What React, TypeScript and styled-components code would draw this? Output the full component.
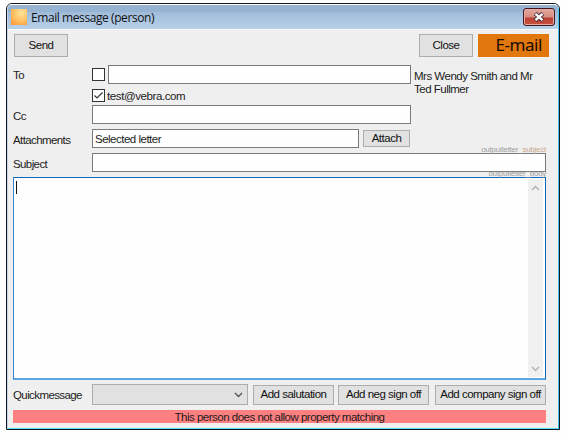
import styled, { createGlobalStyle } from "styled-components";

const GlobalStyle = createGlobalStyle`
  * {
    box-sizing: border-box;
  }
  body {
    margin: 0;
    background: #fefefe;
    overflow: hidden;
  }
`;

const Page = styled.div`
  width: 565px;
  height: 437px;
  padding: 3px 5px 7px 6px;
  font-family: "Liberation Sans", Arial, sans-serif;
  font-size: 11.5px;
  letter-spacing: -0.5px;
  line-height: 13px;
  color: #1c1c1c;
  white-space: nowrap;
`;

const Frame = styled.div`
  height: 427px;
  border: 1px solid #15171c;
  border-radius: 6px 6px 0 0;
  background: #efefef;
  overflow: hidden;
`;

const Inner = styled.div`
  height: 425px;
  border: solid #fff;
  border-width: 1px 1px 1px;
  border-left-color: #c3d8ee;
  border-right-color: #45c3ea;
  border-bottom-color: #4fe0fb;
  border-radius: 5px 5px 0 0;
  overflow: hidden;
`;

const TitleBar = styled.header`
  display: flex;
  align-items: center;
  height: 25px;
  padding: 0 3px;
  background: linear-gradient(#96b4d2 0 7px, #a0bcda 7px, #b8d1ea 24px);
  border-bottom: 1px solid #f6f8fa;
`;

const AppIcon = styled.div`
  width: 16px;
  height: 16px;
  background: radial-gradient(circle at 65% 25%, #ffe39c, #ffbd5e 55%, #fb8f2e);
`;

const Title = styled.h1`
  flex: 1;
  margin: 2px 0 0 4px;
  font: 12px/16px "Open Sans", sans-serif;
  letter-spacing: -0.42px;
  color: #111;
`;

const WindowClose = styled.button`
  display: flex;
  align-items: center;
  justify-content: center;
  width: 32px;
  height: 18px;
  padding: 0;
  border: 1px solid #431820;
  border-radius: 3px;
  background: linear-gradient(#dfa298 0 2px, #d68c80 8px, #bb3f35 9px, #c8523f);
  box-shadow: inset 0 0 0 1px #e5aaa0;
`;

const Form = styled.main`
  display: flex;
  flex-direction: column;
  padding: 4px 12px 0 5px;
`;

const Row = styled.div<{ $height: number; $top?: number }>`
  display: flex;
  align-items: center;
  height: ${(props) => props.$height}px;
  margin-top: ${(props) => props.$top ?? 0}px;
`;

const Label = styled.label<{ $drop?: number }>`
  flex: none;
  width: 79px;
  padding-top: ${(props) => props.$drop ?? 3}px;
  letter-spacing: -0.6px;
`;

const Button = styled.button<{ $width: number; $height?: number; $left?: number }>`
  flex: none;
  width: ${(props) => props.$width}px;
  height: ${(props) => props.$height ?? 20}px;
  margin-left: ${(props) => props.$left ?? 0}px;
  padding: 0;
  border: 1px solid #adadad;
  background: #e1e1e1;
  font: inherit;
  letter-spacing: inherit;
  color: #111;
`;

const EmailBadge = styled.div`
  width: 71px;
  height: 23px;
  margin: 0 -3px 0 5px;
  padding-right: 7px;
  background: #e2770e;
  font: 17px/22px "Noto Sans", sans-serif;
  letter-spacing: -0.45px;
  text-align: right;
  color: #160b02;
`;

const Field = styled.div<{ $width: number; $left?: number }>`
  flex: none;
  width: ${(props) => props.$width}px;
  height: 19px;
  margin-left: ${(props) => props.$left ?? 0}px;
  padding: 3px 2px 0;
  border: 1px solid #7a7a7a;
  background: #fefefe;
`;

const CheckBox = styled.span`
  display: flex;
  flex: none;
  width: 13px;
  height: 13px;
  border: 1px solid #333;
  background: #fff;
`;

const CheckLabel = styled.label`
  margin-left: 2px;
  padding-top: 1px;
  letter-spacing: -0.4px;
`;

const Recipient = styled.div`
  align-self: flex-start;
  margin: 5px 0 0 3px;
`;

const SubjectField = styled(Field)`
  position: relative;
`;

const FieldHint = styled.span<{ $top: number }>`
  position: absolute;
  top: ${(props) => props.$top}px;
  right: -1px;
  font: 8px/8px "Liberation Sans", sans-serif;
  letter-spacing: -0.25px;
  color: #a0a0a0;
  span {
    color: #c9a88a;
  }
`;

const Message = styled.div`
  position: relative;
  display: flex;
  justify-content: space-between;
  height: 203px;
  margin-top: 5px;
  padding: 1px;
  border: 1px solid #0f66bd;
  border-left-color: #3484cc;
  border-bottom: 2px solid #5ba5e0;
  background: #fefefe;
`;

const Caret = styled.span`
  width: 1px;
  height: 13px;
  margin: 2px 0 0 1px;
  background: #111;
`;

const ScrollBar = styled.div`
  display: flex;
  flex-direction: column;
  justify-content: space-between;
  align-items: center;
  width: 15px;
  margin-right: 1px;
  padding: 6px 0 5px;
  background: #f0f0f0;
`;

const Select = styled(Field)`
  display: flex;
  align-items: center;
  justify-content: flex-end;
  height: 21px;
  padding: 0 4px 0 0;
  border-color: #adadad;
  background: #e1e1e1;
`;

const Notice = styled.footer`
  height: 13px;
  margin-top: 5px;
  padding-top: 1px;
  background: #ff8080;
  text-align: center;
`;

const Chevron = ({ up, color = "#b0b0b0" }: { up?: boolean; color?: string }) => (
  <svg width="9" height="6" viewBox="0 0 9 6" fill="none">
    <path
      d={up ? "M1 5L4.5 1.5L8 5" : "M1 1L4.5 4.5L8 1"}
      stroke={color}
      strokeWidth={1.4}
    />
  </svg>
);

const App = () => {
  return (
    <Page>
      <GlobalStyle />
      <Frame>
        <Inner>
          <TitleBar>
            <AppIcon />
            <Title>Email message (person)</Title>
            <WindowClose aria-label="Close window">
              <svg width="12" height="10" viewBox="0 0 12 10">
                <path d="M2.2 1.5L9.8 8.5M9.8 1.5L2.2 8.5" stroke="#4b3038" strokeWidth="4.4" />
                <path d="M2.5 1.8L9.5 8.2M9.5 1.8L2.5 8.2" stroke="#fff" strokeWidth="2.4" />
              </svg>
            </WindowClose>
          </TitleBar>
          <Form>
            <Row $height={23}>
              <Button $width={54} $height={23} $left={1}>Send</Button>
              <Button $width={54} $height={23} $left={351}>Close</Button>
              <EmailBadge>E-mail</EmailBadge>
            </Row>
            <Row $height={19} $top={8}>
              <Label $drop={1}>To</Label>
              <CheckBox />
              <Field $width={303} $left={3} />
              <Recipient>
                Mrs Wendy Smith and Mr
                <br />
                Ted Fullmer
              </Recipient>
            </Row>
            <Row $height={13} $top={5}>
              <Label />
              <CheckBox>
                <svg width="11" height="11" viewBox="0 0 11 11" fill="none">
                  <path d="M1.5 5.5L4 8L9.5 2.5" stroke="#333" strokeWidth="1.2" />
                </svg>
              </CheckBox>
              <CheckLabel>test@vebra.com</CheckLabel>
            </Row>
            <Row $height={19} $top={3}>
              <Label>Cc</Label>
              <Field $width={319} />
            </Row>
            <Row $height={19} $top={5}>
              <Label>Attachments</Label>
              <Field $width={267}>Selected letter</Field>
              <Button $width={47} $height={17} $left={4}>Attach</Button>
            </Row>
            <Row $height={19} $top={5}>
              <Label>Subject</Label>
              <SubjectField $width={454}>
                <FieldHint $top={-8}>
                  outputletter_<span>subject</span>
                </FieldHint>
              </SubjectField>
            </Row>
            <Message>
              <FieldHint $top={-8}>outputletter_body</FieldHint>
              <Caret />
              <ScrollBar>
                <Chevron up />
                <Chevron />
              </ScrollBar>
            </Message>
            <Row $height={21} $top={4}>
              <Label $drop={2}>Quickmessage</Label>
              <Select $width={156}>
                <Chevron color="#555" />
              </Select>
              <Button $width={81} $left={5}>Add salutation</Button>
              <Button $width={91} $left={4}>Add neg sign off</Button>
              <Button $width={111} $left={6}>Add company sign off</Button>
            </Row>
            <Notice>This person does not allow property matching</Notice>
          </Form>
        </Inner>
      </Frame>
    </Page>
  );
};
export default App;
